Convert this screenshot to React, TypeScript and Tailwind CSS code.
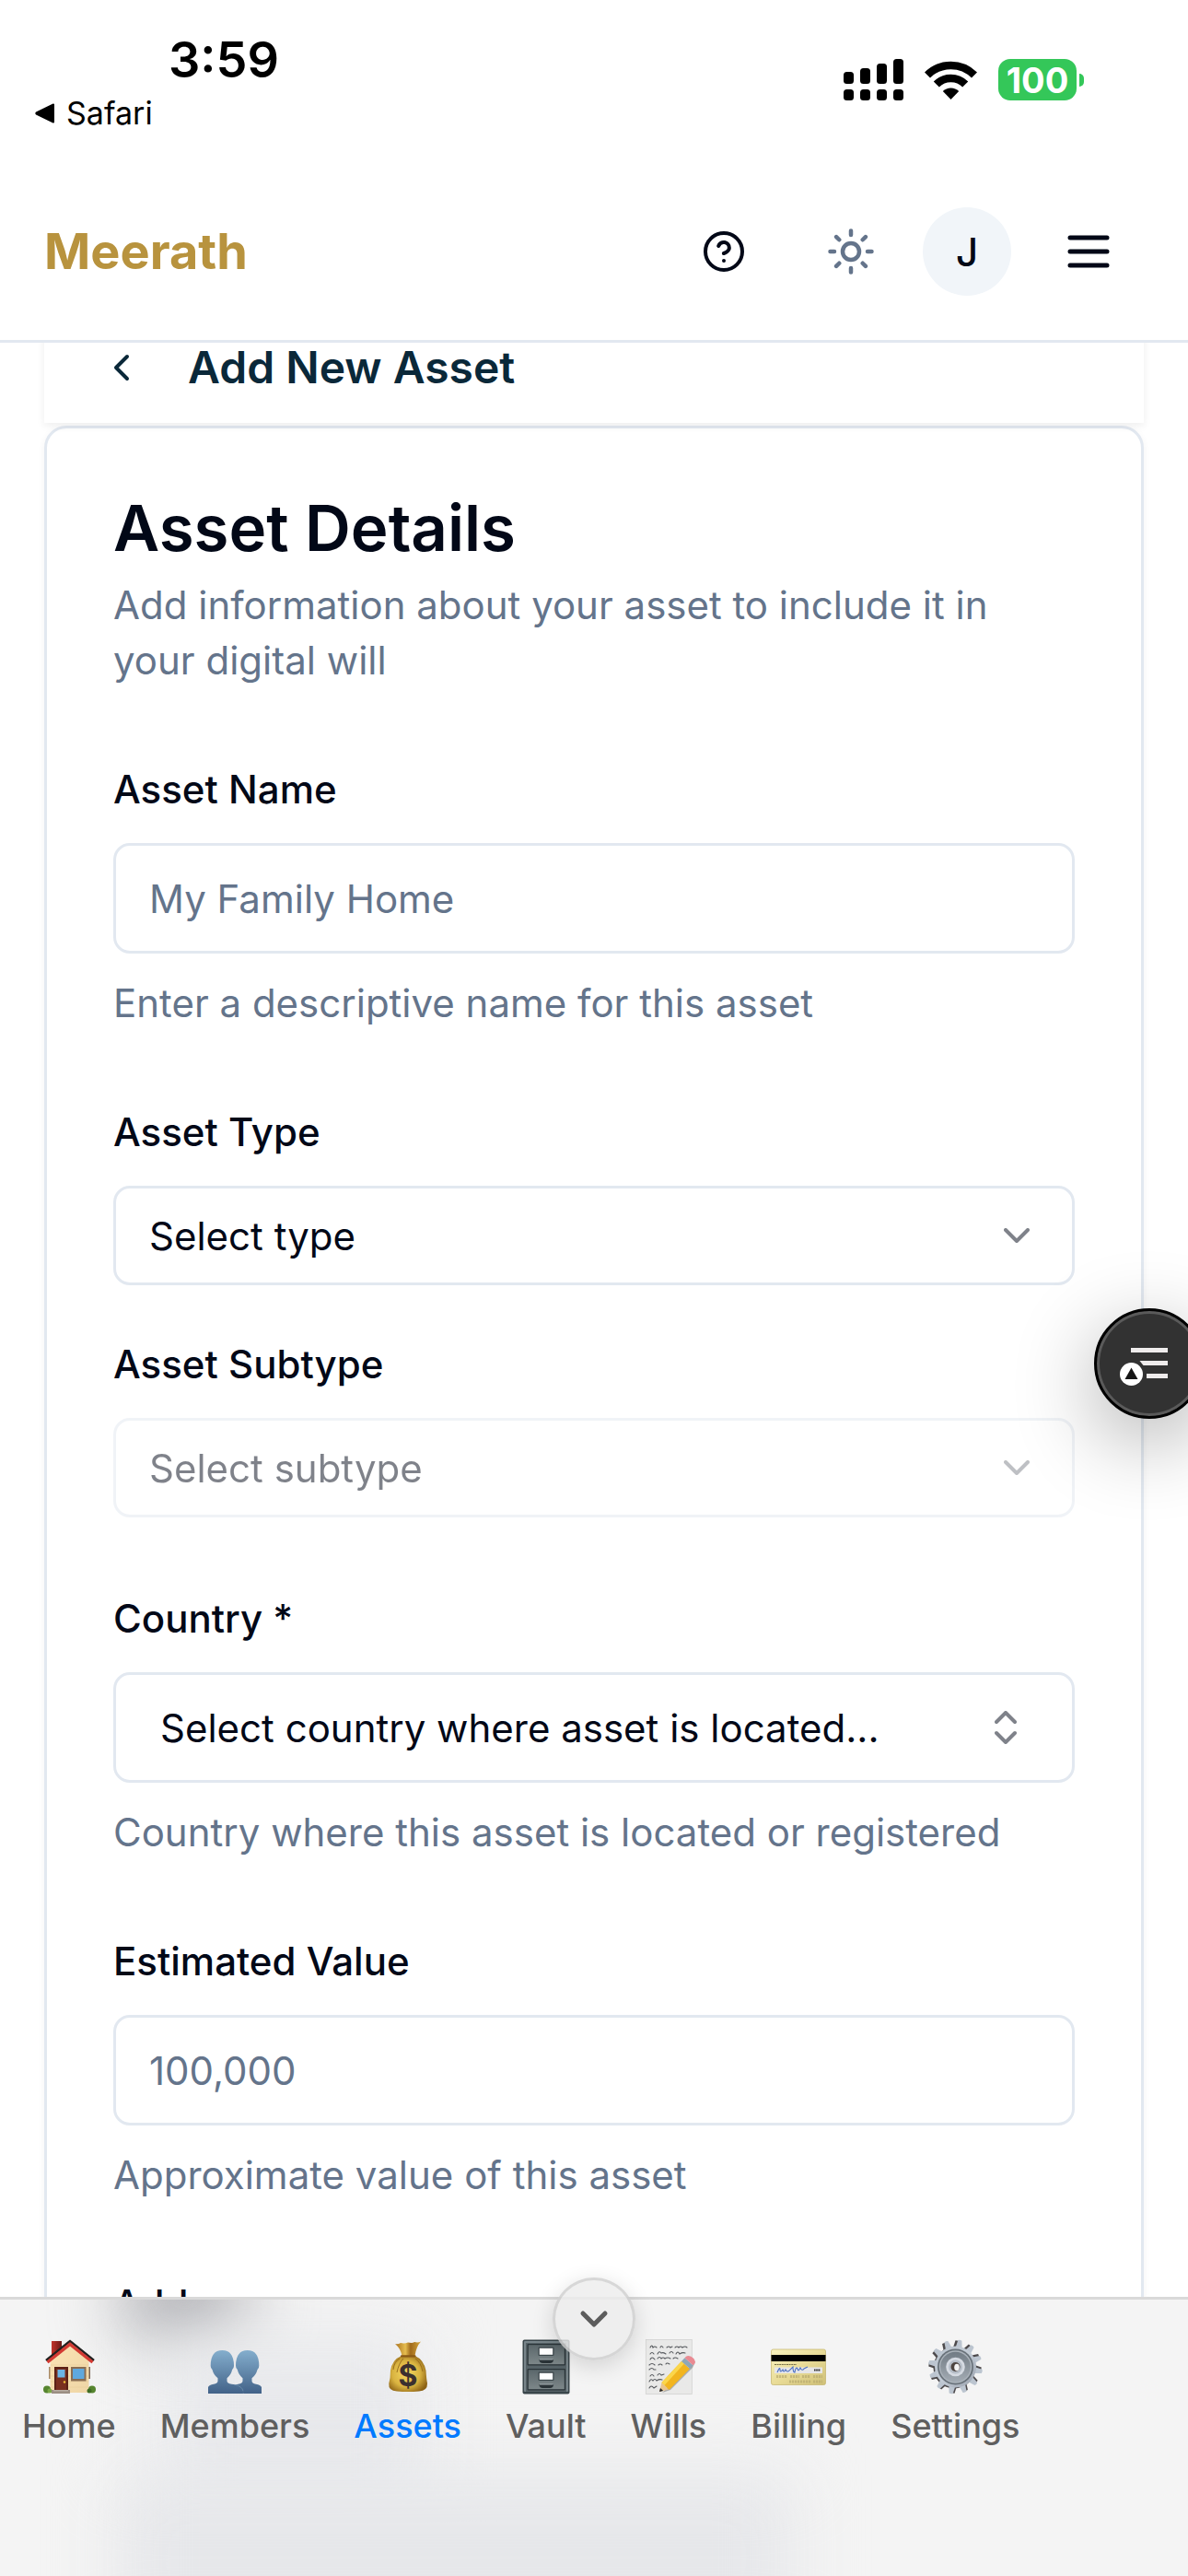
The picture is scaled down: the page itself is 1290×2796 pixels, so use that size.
import type { ReactNode } from "react";
import { ChevronDown, ChevronLeft, ChevronsUpDown } from "lucide-react";

function StatusBar() {
  return (
    <div className="flex h-[177px] shrink-0 items-start justify-between bg-white pr-[113px] pl-[38px] text-black">
      <div className="flex flex-col pt-[35px]">
        <span className="pl-[145px] text-[54px] leading-[60px] font-semibold">3:59</span>
        <a href="#safari" className="mt-[8px] flex items-center gap-[12px] text-[34px] leading-[40px]">
          <svg viewBox="0 0 22 22" className="h-[22px] w-[22px]" aria-hidden="true">
            <path d="M20 1.5v19L2 11.8q-1.4-.8 0-1.6z" fill="#000" stroke="#000" strokeWidth="2" strokeLinejoin="round" />
          </svg>
          Safari
        </a>
      </div>
      <div className="flex items-center pt-[64px]">
        <svg viewBox="0 0 65 45" className="h-[45px] w-[65px]" aria-hidden="true">
          <rect x="0" y="14" width="11" height="13" rx="3.5" />
          <rect x="18" y="10" width="11" height="17" rx="3.5" />
          <rect x="36" y="5" width="11" height="22" rx="3.5" />
          <rect x="54" y="0" width="11" height="27" rx="3.5" />
          <rect x="0" y="33" width="11" height="12" rx="3.5" />
          <rect x="18" y="33" width="11" height="12" rx="3.5" />
          <rect x="36" y="33" width="11" height="12" rx="3.5" />
          <rect x="54" y="33" width="11" height="12" rx="3.5" />
        </svg>
        <svg viewBox="0 0 57 42" className="ml-[23px] h-[42px] w-[57px]" fill="none" stroke="#000" strokeWidth="8.5" aria-hidden="true">
          <path d="M3 15.5a36 36 0 0 1 51 0" />
          <path d="M12.8 25.5a22 22 0 0 1 31.4 0" />
          <path d="M28.5 42 19.8 33a12.5 12.5 0 0 1 17.4 0z" fill="#000" stroke="none" />
        </svg>
        <span className="ml-[23px] flex h-[45px] w-[85px] items-center justify-center rounded-[13px] bg-[#34c759] text-[38px] leading-none font-bold text-white">
          100
        </span>
        <span className="ml-[3px] h-[14px] w-[5px] rounded-r-[5px] bg-[#34c759]" />
      </div>
    </div>
  );
}

function Header() {
  return (
    <header className="flex h-[195px] shrink-0 items-center justify-between border-b-3 border-[#e2e8f0] bg-white px-[48px]">
      <a href="#home" className="text-[54px] leading-[84px] font-bold text-[#b8933e]">
        Meerath
      </a>
      <div className="flex items-center gap-[24px] text-[#020817]">
        <button type="button" aria-label="Help" className="flex size-[120px] items-center justify-center">
          <svg viewBox="0 0 24 24" className="size-[48px]" fill="none" stroke="currentColor" strokeWidth="2" strokeLinecap="round" strokeLinejoin="round" aria-hidden="true">
            <circle cx="12" cy="12" r="10" />
            <path d="M9.09 9a3 3 0 0 1 5.83 1c0 2-3 3-3 3" />
            <path d="M12 17h.01" />
          </svg>
        </button>
        <button type="button" aria-label="Toggle theme" className="flex size-[108px] items-center justify-center text-[#64748b]">
          <svg viewBox="0 0 24 24" className="size-[54px]" fill="none" stroke="currentColor" strokeWidth="2" strokeLinecap="round" aria-hidden="true">
            <circle cx="12" cy="12" r="4" />
            <path d="M12 2v2M12 20v2M4.93 4.93l1.41 1.41M17.66 17.66l1.41 1.41M2 12h2M20 12h2M6.34 17.66l-1.41 1.41M19.07 4.93l-1.41 1.41" />
          </svg>
        </button>
        <button type="button" className="flex size-[96px] items-center justify-center rounded-full bg-[#f1f5f9] text-[42px] font-medium">
          J
        </button>
        <button type="button" aria-label="Menu" className="flex size-[120px] items-center justify-center">
          <svg viewBox="0 0 24 24" className="size-[60px]" fill="none" stroke="currentColor" strokeWidth="2" strokeLinecap="round" aria-hidden="true">
            <path d="M4 6h16M4 12h16M4 18h16" />
          </svg>
        </button>
      </div>
    </header>
  );
}

function Field({ id, label, hint, children }: { id: string; label: string; hint?: string; children: ReactNode }) {
  return (
    <div className="flex flex-col gap-[24px]">
      <div className="h-[72px] text-[48px] leading-[72px]">
        <label htmlFor={id} className="text-[42px] font-medium">
          {label}
        </label>
      </div>
      {children}
      {hint && <p className="text-[42px] leading-[60px] text-[#64748b]">{hint}</p>}
    </div>
  );
}

function TextInput({ id, placeholder }: { id: string; placeholder: string }) {
  return (
    <input
      id={id}
      type="text"
      placeholder={placeholder}
      className="h-[120px] w-full rounded-[18px] border-3 border-[#e2e8f0] bg-white px-[36px] text-[42px] placeholder:text-[#64748b]"
    />
  );
}

function SelectInput({ id, text, disabled }: { id: string; text: string; disabled?: boolean }) {
  return (
    <div className={disabled ? "relative opacity-50" : "relative"}>
      <select
        id={id}
        disabled={disabled}
        className="block h-[108px] w-full appearance-none rounded-[18px] border-3 border-[#e2e8f0] bg-white px-[36px] text-[42px] text-[#020817] opacity-100"
      >
        <option>{text}</option>
      </select>
      <ChevronDown className="pointer-events-none absolute inset-y-0 right-[39px] my-auto size-[48px] opacity-50" />
    </div>
  );
}

function HomeIcon() {
  return (
    <svg viewBox="0 0 60 60" className="size-[60px]" aria-hidden="true">
      <defs>
        <linearGradient id="wall" x1="0" y1="0" x2="1" y2="1">
          <stop offset="0" stopColor="#fbe3b4" />
          <stop offset="1" stopColor="#efd6a6" />
        </linearGradient>
        <linearGradient id="chimney" x1="0" y1="0" x2="1" y2="0">
          <stop offset="0" stopColor="#c2342c" />
          <stop offset="1" stopColor="#6b1a17" />
        </linearGradient>
      </defs>
      <rect x="11" y="2" width="11" height="17" fill="url(#chimney)" />
      <rect x="8" y="30" width="2" height="13" fill="#a88a68" />
      <rect x="51" y="30" width="2" height="13" fill="#7c6655" />
      <path d="M9.500 22 31 5l20.500 17v36h-42z" fill="url(#wall)" />
      <path d="M10 28h41M10 34h41M10 40h41M10 46h41M10 52h41" stroke="#e6c994" strokeWidth=".5" />
      <path d="M5 23 31 2l26 21" fill="none" stroke="#22201f" strokeWidth="2.500" />
      <path d="M6.500 25 31 5.500 55.500 25" fill="none" stroke="#d33a33" strokeWidth="3.400" />
      <rect x="14" y="30" width="15" height="26" fill="#5c2116" />
      <rect x="16" y="32" width="11" height="23" fill="#7a2f1f" />
      <rect x="17.500" y="33" width="8" height="8.500" fill="#6bb5e6" />
      <circle cx="25" cy="46.500" r="1.200" fill="#f3c33c" />
      <rect x="32" y="30" width="16.500" height="15.500" fill="#8a6d52" />
      <rect x="34" y="32" width="12.500" height="11" fill="#5fa8de" />
      <circle cx="6" cy="54.500" r="4" fill="#56852f" />
      <circle cx="55" cy="54.500" r="4" fill="#56852f" />
      <circle cx="9" cy="56" r="2.500" fill="#7aa845" />
      <circle cx="52" cy="56" r="2.500" fill="#3f6c24" />
      <rect x="11" y="55" width="20" height="4" fill="#9b8e83" />
      <rect x="13" y="55" width="16" height="1.500" fill="#b8aca1" />
    </svg>
  );
}

function MembersIcon() {
  return (
    <svg viewBox="0 0 60 60" className="size-[60px]" aria-hidden="true">
      <defs>
        <linearGradient id="people" gradientUnits="userSpaceOnUse" x1="0" y1="12" x2="0" y2="59">
          <stop offset="0" stopColor="#84aecd" />
          <stop offset="1" stopColor="#426288" />
        </linearGradient>
      </defs>
      <g fill="url(#people)">
        <path d="M1 59V52q1-2.500 6-3.300 4.500-.7 4.500-3.500v-3Q7 39 5.500 33 3.500 31 3.700 28.500 3.800 12 16.300 12T29 28.500q.2 2.500-1.800 4.500-1.500 6-5.700 9.200v3q0 2.800 5 3.500 9 1 12 5.300L39 59z" />
        <path d="M59 59V52q-1-2.500-6-3.300-4.500-.7-4.500-3.500v-3Q53 39 54.500 33q2-2 1.800-4.500Q56.200 12 43.700 12T31 28.500q-.2 2.500 1.800 4.500 1.500 6 5.700 9.200v3q0 2.800-5 3.500l-3 .7 9 9.600z" />
      </g>
      <path d="M29.500 49.300q8.500 1.500 9.500 7" fill="none" stroke="#7597b5" strokeWidth=".7" />
    </svg>
  );
}

function AssetsIcon() {
  return (
    <svg viewBox="0 0 60 60" className="size-[60px]" aria-hidden="true">
      <defs>
        <radialGradient id="bag" cx=".45" cy=".5" r=".6">
          <stop offset="0" stopColor="#f5d860" />
          <stop offset=".6" stopColor="#d9b340" />
          <stop offset="1" stopColor="#8d6215" />
        </radialGradient>
        <linearGradient id="bagNeck" x1="0" y1="0" x2="1" y2="0">
          <stop offset="0" stopColor="#a8701c" />
          <stop offset=".4" stopColor="#e6bd4f" />
          <stop offset=".6" stopColor="#a06a1b" />
          <stop offset="1" stopColor="#d6a73c" />
        </linearGradient>
      </defs>
      <path d="M16 5q3 1 6-1 4 1 8-.5 5 1 7-.5 4 1 7-.5Q39 8 37.500 18h-14Q22 10 16 5z" fill="url(#bagNeck)" />
      <path d="M23 18h14.500Q47 22 49.500 34 50 43 51 48q.3 8-9 8.500-12 1-24 0Q8.500 56 9.300 48 11 42 11 34 13 22 23 18z" fill="url(#bag)" />
      <path d="M14 33q1-9 7-12M18 36q2-10 7-15M46 35q-2-10-8-14" fill="none" stroke="#94681a" strokeWidth=".9" />
      <path d="M23 18.300h14.500" stroke="#8a5916" strokeWidth="2.200" strokeLinecap="round" />
      <text x="30" y="51" textAnchor="middle" fontSize="32" fontWeight="700" fill="#3b302f">$</text>
    </svg>
  );
}

function VaultIcon() {
  return (
    <svg viewBox="0 0 60 60" className="size-[60px]" aria-hidden="true">
      <defs>
        <linearGradient id="drawer" x1="0" y1="0" x2="0" y2="1">
          <stop offset="0" stopColor="#5b676b" />
          <stop offset="1" stopColor="#7d8789" />
        </linearGradient>
      </defs>
      <rect x="4.500" y=".5" width="51" height="59" rx="2" fill="#3a464b" />
      <rect x="6" y="2" width="48" height="55" rx="1" fill="#78858a" />
      <rect x="8" y="4" width="44" height="53" fill="#566267" />
      {[5, 32].map((y) => (
        <g key={y}>
          <rect x="9.500" y={y} width="41.500" height="23.500" rx="1" fill="#2b3539" />
          <rect x="10.800" y={y + 1.2} width="39" height="21" fill="url(#drawer)" />
          <rect x="21.500" y={y + 3.5} width="17" height="9.500" rx="1" fill="#3c474b" />
          <rect x="22.800" y={y + 4.8} width="14.400" height="7" fill="#fff" />
          <path d={`M22.500 ${y + 17}h15.500q0 4-4 4h-7.500q-4 0-4-4z`} fill="#2a3337" />
          <path d={`M23 ${y + 17}h14.500`} stroke="#a5afb2" strokeWidth="1" />
        </g>
      ))}
    </svg>
  );
}

function WillsIcon() {
  return (
    <svg viewBox="0 0 60 60" className="size-[60px]" aria-hidden="true">
      <rect x="5.300" y=".5" width="50" height="59" fill="#e9e9e8" stroke="#d2d2d1" strokeWidth=".8" />
      <g fill="none" stroke="#55585c" strokeWidth="1.100" strokeLinecap="round">
        <path d="M10 9q2-4 3 0 2-2 4 0M21 9q1-3 3 0M28 9q2-2 4 0l2-1M37 9q2-2 4 0 2-2 4 0 3-2 5 0" />
        <path d="M10 16q2-3 4 0M18 16q2-4 4-1 2-1 5 1M31 15q2-3 4 0M38 16q2-4 4 0 3-2 6-1" />
        <path d="M10 22q2-4 5 0M18 21q2-3 4 0 2-2 4 0 3-2 6 0M35 21q2-2 5 0" />
        <path d="M9 28q3-3 6 0M19 28q2-2 4 0M27 27q1-2 4 0" />
        <path d="M9 33q3-3 5 0l2 0" />
        <path d="M10 40q2-3 4 0M18 39q2-3 4 0l3-1" />
        <path d="M9 46q2-4 4-1 2-3 4 0 3-2 6-1" />
        <path d="M9 53q2-4 5 0l3-2" />
      </g>
      <path d="m23 58 9-3 24-24 3-6z" fill="#707070" opacity=".5" />
      <path d="M20 57 22.500 47l7.500 7.500z" fill="#e8c48d" />
      <path d="m20 57 1-4 3.200 3z" fill="#252525" />
      <path d="M22.500 47 44 24l9 8-22.500 23z" fill="#f2b51f" />
      <path d="M22.500 47 44 24l3 2.500L25.500 50z" fill="#fbd64a" />
      <path d="m44 24 3.500-3.700 9 8L53 32z" fill="#8ea7b7" />
      <path d="m47.500 20.300 1.500-1.500q3-2 7.500 1.500 4 3.500 1.500 6.500L56.500 28.300z" fill="#e98a92" />
    </svg>
  );
}

function BillingIcon() {
  return (
    <svg viewBox="0 0 60 60" className="size-[60px]" aria-hidden="true">
      <defs>
        <linearGradient id="card" x1="0" y1="0" x2="1" y2="1">
          <stop offset="0" stopColor="#f8f2bf" />
          <stop offset=".5" stopColor="#e9dc98" />
          <stop offset="1" stopColor="#cfc077" />
        </linearGradient>
      </defs>
      <rect x=".5" y="11" width="59" height="38.500" rx="2" fill="url(#card)" stroke="#c3b36c" strokeWidth=".7" />
      <rect x=".5" y="17" width="59" height="7" fill="#000" />
      <path d="M4 27.500h24" stroke="#77704a" strokeWidth="1.200" strokeDasharray="2 .6" />
      <rect x="4" y="30.500" width="52" height="6.500" fill="#e6e6e8" />
      <path d="M7 36q3-7 3-3 0 4 3 0 1 4 3 0 2 4 5 0l3-3q0 6 2 6 1-7 3-4 1 4 3-1 2 4 4 1l4-2" fill="none" stroke="#4a6fc4" strokeWidth="1.100" />
      <path d="M47 33.500h7" stroke="#333" strokeWidth="2" strokeDasharray="1.600 .6" />
      <path d="M6 40.500h12M21 40.500h10M34 40.500h9M46 40.500h10M20 46h24M46 46h10" stroke="#b9ab70" strokeWidth="3" strokeDasharray="2.200 .8" opacity=".7" />
    </svg>
  );
}

const TEETH = [0, 30, 60, 90, 120, 150, 180, 210, 240, 270, 300, 330];

function SettingsIcon() {
  return (
    <svg viewBox="0 0 60 60" className="size-[60px]" aria-hidden="true">
      <defs>
        <linearGradient id="gear" x1="0" y1="0" x2="1" y2="1">
          <stop offset="0" stopColor="#b9c3cd" />
          <stop offset=".5" stopColor="#c3cbd5" />
          <stop offset="1" stopColor="#98a0ac" />
        </linearGradient>
        <linearGradient id="dish" x1="0" y1="0" x2="0" y2="1">
          <stop offset="0" stopColor="#717b84" />
          <stop offset="1" stopColor="#a3abb3" />
        </linearGradient>
      </defs>
      <g fill="#4d4a4c">
        <circle cx="29" cy="31" r="22.500" />
        {TEETH.map((a) => (
          <path key={a} d="M25 10 26.500 1.500h4.500L33 10z" transform={`rotate(${a + 8} 30 30)`} />
        ))}
      </g>
      <g fill="#bcc5d0">
        {TEETH.map((a) => (
          <path key={a} d="M27 9 28.200 1q2.300-1 4.200 0L34 9z" transform={`rotate(${a + 10} 30.500 30)`} />
        ))}
      </g>
      <circle cx="30.500" cy="30" r="22.500" fill="url(#gear)" />
      <circle cx="30.500" cy="30" r="19.500" fill="#687179" />
      <circle cx="30.500" cy="30" r="17.800" fill="#aab2ba" />
      <circle cx="30.500" cy="30" r="16.300" fill="url(#dish)" />
      <circle cx="30.500" cy="30" r="10.300" fill="#d5dae2" />
      <circle cx="30.500" cy="30" r="7.500" fill="#b5bdc7" />
      <circle cx="30.500" cy="30" r="5" fill="#4e4540" />
      <ellipse cx="32" cy="30.500" rx="2.800" ry="3.800" fill="#f4f4f4" />
    </svg>
  );
}

const TABS = [
  { label: "Home", Icon: HomeIcon },
  { label: "Members", Icon: MembersIcon },
  { label: "Assets", Icon: AssetsIcon, active: true },
  { label: "Vault", Icon: VaultIcon },
  { label: "Wills", Icon: WillsIcon },
  { label: "Billing", Icon: BillingIcon },
  { label: "Settings", Icon: SettingsIcon },
];

function BottomNav() {
  return (
    <nav className="relative h-[303px] shrink-0 border-t-3 border-[#d9d9d9] bg-[#f4f4f4]">
      {/* Soft shading of the page content that shows through the frosted bar */}
      <div className="pointer-events-none absolute inset-0 overflow-hidden" aria-hidden="true">
        <div className="absolute -top-[40px] left-[130px] h-[80px] w-[140px] rounded-full bg-[#a5a6ab] blur-[36px]" />
        <div className="absolute top-[40px] left-[180px] h-[180px] w-[280px] bg-[#e8e9ec] blur-[36px]" />
        <div className="absolute top-[190px] left-[130px] h-[180px] w-[730px] bg-[#e6e7ea] blur-[36px]" />
      </div>
      <div className="relative flex gap-[48px] px-[24px] pt-[43px]">
        {TABS.map(({ label, Icon, active }) => (
          <a
            key={label}
            href={`#${label.toLowerCase()}`}
            aria-current={active ? "page" : undefined}
            className={
              active
                ? "flex flex-col items-center gap-[10px] text-[36px] leading-[48px] font-medium text-[#007aff]"
                : "flex flex-col items-center gap-[10px] text-[36px] leading-[48px] font-medium text-[#5f5f5f]"
            }
          >
            <Icon />
            {label}
          </a>
        ))}
      </div>
      <button
        type="button"
        aria-label="Collapse navigation"
        className="absolute inset-x-0 -top-[24px] mx-auto flex size-[90px] items-center justify-center rounded-full border-3 border-black/10 bg-[#ececec]/80 text-[#5c5c5c] shadow-[0_6px_24px_rgba(0,0,0,0.14)]"
      >
        <ChevronDown className="size-[48px]" strokeWidth={2.5} />
      </button>
    </nav>
  );
}

function QuickMenuButton() {
  return (
    <button
      type="button"
      aria-label="Quick menu"
      className="absolute top-[1420px] -right-[18px] flex size-[120px] items-center justify-center rounded-full border-3 border-black bg-[#323232] shadow-[inset_0_0_0_3px_#5a5a5a,0_24px_90px_rgba(0,0,0,0.32)]"
    >
      <svg viewBox="0 0 64 64" className="mr-[12px] size-[64px] shrink-0" aria-hidden="true">
        <path d="M18 17.500h40" stroke="#efecec" strokeWidth="5" />
        <path d="M27.500 29H58v5H31.500z" fill="#efecec" />
        <path d="M35 45.500h23" stroke="#efecec" strokeWidth="5" />
        <circle cx="18.500" cy="43.500" r="12.500" fill="#fff" />
        <path d="m18.500 36.500 7 12.500h-14z" fill="#151515" />
      </svg>
    </button>
  );
}

export default function App() {
  return (
    <div className="relative flex h-screen flex-col overflow-hidden bg-white font-['Inter',sans-serif] text-[#020817]">
      <StatusBar />
      <Header />
      <main className="min-h-0 flex-1 overflow-hidden px-[48px]">
        <div className="relative z-10 -mt-[33px] mb-[3px] flex h-[120px] items-center bg-white px-[60px] text-[#0a2839] shadow-[0_3px_9px_rgba(0,0,0,0.07)]">
          <button type="button" aria-label="Back" className="flex size-[48px] items-center justify-center">
            <ChevronLeft className="size-[48px]" />
          </button>
          <h1 className="ml-[48px] text-[48px] leading-[48px] font-semibold">Add New Asset</h1>
        </div>
        <form className="rounded-[24px] border-3 border-[#e2e8f0] bg-white p-[72px] shadow-[0_3px_9px_rgba(0,0,0,0.05)]">
          <h2 className="text-[69px] leading-[72px] font-semibold">Asset Details</h2>
          <p className="mt-[18px] mb-[72px] text-[42px] leading-[60px] text-[#64748b]">
            Add information about your asset to include it in your digital will
          </p>
          <div className="flex flex-col gap-[72px]">
            <Field id="name" label="Asset Name" hint="Enter a descriptive name for this asset">
              <TextInput id="name" placeholder="My Family Home" />
            </Field>
            <div className="flex flex-col gap-[48px]">
              <Field id="type" label="Asset Type">
                <SelectInput id="type" text="Select type" />
              </Field>
              <Field id="subtype" label="Asset Subtype">
                <SelectInput id="subtype" text="Select subtype" disabled />
              </Field>
            </div>
            <Field id="country" label="Country *" hint="Country where this asset is located or registered">
              <div className="relative">
                <select
                  id="country"
                  className="block h-[120px] w-full appearance-none rounded-[18px] border-3 border-[#e2e8f0] bg-white px-[48px] text-[42px]"
                >
                  <option>Select country where asset is located...</option>
                </select>
                <ChevronsUpDown className="pointer-events-none absolute inset-y-0 right-[51px] my-auto size-[48px] opacity-50" />
              </div>
            </Field>
            <Field id="value" label="Estimated Value" hint="Approximate value of this asset">
              <TextInput id="value" placeholder="100,000" />
            </Field>
            <Field id="address" label="Address">
              <TextInput id="address" placeholder="" />
            </Field>
          </div>
        </form>
      </main>
      <BottomNav />
      <QuickMenuButton />
    </div>
  );
}
